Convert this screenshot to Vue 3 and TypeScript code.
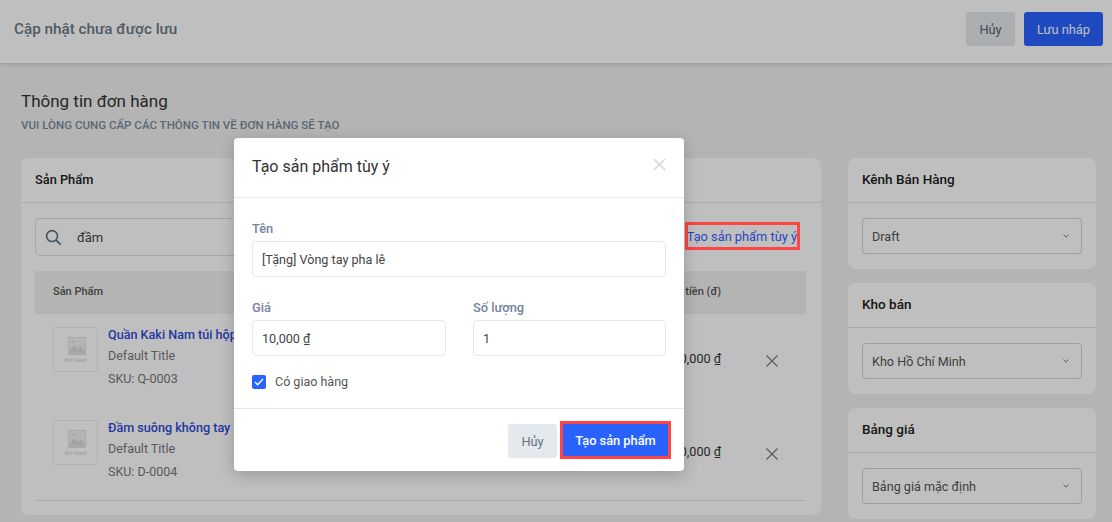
<script setup lang="ts">
const products = [
  { name: 'Quần Kaki Nam túi hộp', sku: 'SKU: Q-0003' },
  { name: 'Đầm suông không tay', sku: 'SKU: D-0004' },
]
const panels = [
  { title: 'Kênh Bán Hàng', value: 'Draft' },
  { title: 'Kho bán', value: 'Kho Hồ Chí Minh' },
  { title: 'Bảng giá', value: 'Bảng giá mặc định' },
]
</script>

<template>
  <div class="page">
    <header class="topbar">
      <div class="topbar-title">Cập nhật chưa được lưu</div>
      <div class="topbar-actions">
        <button class="btn btn-muted">Hủy</button>
        <button class="btn btn-primary">Lưu nháp</button>
      </div>
    </header>

    <div class="content">
      <h1 class="page-title">Thông tin đơn hàng</h1>
      <p class="page-sub">Vui lòng cung cấp các thông tin về đơn hàng sẽ tạo</p>

      <div class="columns">
        <section class="card main-card">
          <div class="card-head main-head">Sản Phẩm</div>
          <div class="main-body">
            <div class="toolbar">
              <div class="search">
                <svg class="search-icon" width="17" height="17" viewBox="0 0 18 18" fill="none" stroke="#5f6b75" stroke-width="1.7">
                  <circle cx="7.5" cy="7.5" r="5.8" />
                  <path d="M11.8 11.8 16.6 16.6" />
                </svg>
                <span>đầm</span>
              </div>
              <a class="custom-link">Tạo sản phẩm tùy ý</a>
            </div>
            <div class="table-head">
              <span>Sản Phẩm</span>
              <span class="head-total">Thành tiền (đ)</span>
            </div>
            <div v-for="p in products" :key="p.sku" class="row">
              <div class="thumb">
                <svg width="28" height="29" viewBox="0 0 28 29">
                  <rect x="6" y="1" width="18" height="18" fill="#e2e2e2" />
                  <rect x="7" y="2" width="16" height="14" fill="#f0f0f0" />
                  <path d="M7 16 12 9l4 4 3-3 4 6z" fill="#dadada" />
                  <circle cx="11" cy="5.5" r="1.6" fill="#e2e2e2" />
                </svg>
                <span class="thumb-text">Not found</span>
              </div>
              <div class="info">
                <div class="name">{{ p.name }}</div>
                <div class="variant">Default Title</div>
                <div class="variant">{{ p.sku }}</div>
              </div>
              <div class="price">10,000 ₫</div>
              <svg class="remove" width="12" height="12" viewBox="0 0 12 12" stroke="#777" stroke-width="1.1">
                <path d="M.5.5l11 11M11.5.5l-11 11" />
              </svg>
            </div>
          </div>
        </section>

        <aside class="side">
          <section v-for="s in panels" :key="s.title" class="card side-card">
            <div class="card-head">{{ s.title }}</div>
            <div class="side-body">
              <div class="select">
                <span>{{ s.value }}</span>
                <svg width="6" height="4" viewBox="0 0 6 4" fill="none" stroke="#7d7d7d" stroke-width="1">
                  <path d="M.5.5 3 3.2 5.5.5" />
                </svg>
              </div>
            </div>
          </section>
        </aside>
      </div>
    </div>

    <div class="overlay">
      <div class="link-mark"></div>
      <div class="modal">
        <div class="modal-head">
          <span>Tạo sản phẩm tùy ý</span>
          <svg width="13" height="13" viewBox="0 0 14 14" stroke="#d4d4d4" stroke-width="1.5">
            <path d="M1 1l12 12M13 1 1 13" />
          </svg>
        </div>
        <div class="modal-body">
          <label class="field">
            <span class="label">Tên</span>
            <span class="input">[Tặng] Vòng tay pha lê</span>
          </label>
          <div class="field-row">
            <label class="field">
              <span class="label">Giá</span>
              <span class="input">10,000 ₫</span>
            </label>
            <label class="field">
              <span class="label">Số lượng</span>
              <span class="input">1</span>
            </label>
          </div>
          <div class="check-row">
            <span class="check">
              <svg width="10" height="8" viewBox="0 0 10 8" fill="none" stroke="#fff" stroke-width="1.4">
                <path d="M1 4l2.7 2.7L9 1" />
              </svg>
            </span>
            <span>Có giao hàng</span>
          </div>
        </div>
        <div class="modal-foot">
          <button class="btn btn-cancel">Hủy</button>
          <button class="btn btn-create">Tạo sản phẩm</button>
        </div>
      </div>
    </div>
  </div>
</template>

<style>
html, body { margin: 0; height: 100%; overflow: hidden; }
</style>

<style scoped>
* { box-sizing: border-box; }
.page {
  position: relative;
  width: 1112px;
  height: 522px;
  overflow: hidden;
  background: #f1f1f1;
  font-family: Roboto, "Noto Sans", sans-serif;
  font-size: 14px;
  color: #333;
}
.topbar {
  height: 63px;
  padding: 12px 9px 0 14px;
  display: flex;
  justify-content: space-between;
  background: #fff;
  box-shadow: 0 1px 4px rgba(0, 0, 0, .18);
}
.topbar-title { padding-top: 8px; font-size: 15.25px; line-height: 18px; font-weight: 500; color: #6c7a86; }
.topbar-actions { display: flex; gap: 9px; }
.btn {
  height: 34px;
  border: 0;
  border-radius: 3px;
  font-family: inherit;
  font-size: 12.8px;
  padding: 0;
}
.btn-muted { width: 49px; background: #e4e9ed; color: #55606b; }
.btn-primary { width: 79px; background: #2962ff; color: #fff; }
.content { padding: 28px 16px 0 21px; }
.page-title { margin: 0; font-size: 17px; line-height: 20px; font-weight: 400; color: #333; }
.page-sub {
  margin: 6px 0 0;
  font-size: 11.55px;
  line-height: 16px;
  font-weight: 500;
  text-transform: uppercase;
  color: #7a8a99;
}
.columns { display: flex; gap: 27px; margin-top: 25px; align-items: flex-start; }
.card { background: #fff; border-radius: 8px; }
.main-card { width: 800px; height: 357px; }
.card-head {
  height: 45px;
  padding: 0 14px 2px;
  display: flex;
  align-items: center;
  font-size: 13.5px;
  font-weight: 500;
  color: #212121;
  border-bottom: 1px solid #e0e4e8;
}
.main-head { font-size: 12.8px; }
.main-body { padding: 15px 15px 0 14px; }
.toolbar { display: flex; justify-content: space-between; height: 38px; }
.search {
  width: 500px;
  display: flex;
  align-items: center;
  gap: 15px;
  padding-left: 9px;
  border: 1px solid #dde1e5;
  border-radius: 4px;
  font-size: 13px;
  color: #444;
}
.custom-link { padding: 10px 9px 0 0; color: #3a5cff; white-space: nowrap; font-size: 12.8px; line-height: 17px; }
.table-head {
  margin-top: 15px;
  height: 43px;
  padding: 0 85px 2px 18px;
  display: flex;
  align-items: center;
  justify-content: space-between;
  background: #f1f1f1;
  font-size: 11px;
  font-weight: 500;
  color: #555;
}
.row {
  height: 93px;
  padding: 13px 28px 0 18px;
  display: flex;
}
.row:last-child { height: 94px; border-bottom: 1px solid #e4e4e4; }
.thumb {
  width: 45px;
  height: 45px;
  flex: none;
  border: 1px solid #ececec;
  border-radius: 3px;
  display: flex;
  flex-direction: column;
  align-items: center;
  padding-top: 8px;
}
.thumb svg { margin-bottom: -8px; }
.thumb-text { font-size: 5px; font-style: italic; font-weight: 700; color: #dcdcdc; line-height: 6px; }
.info { margin-left: 10px; flex: 1; margin-top: -1px; }
.name { font-size: 12.6px; line-height: 17px; font-weight: 500; color: #2f4bd8; }
.variant { margin-top: 3px; font-size: 12.5px; line-height: 19px; color: #777; }
.variant + .variant { margin-top: 4px; }
.price { margin-top: 23px; font-size: 12.6px; line-height: 18px; color: #333; }
.remove { margin: 28px 0 0 45px; flex: none; }
.side { width: 248px; display: flex; flex-direction: column; gap: 14px; }
.side-card { height: 111px; }
.side-body { padding: 15px 14px; }
.select {
  height: 36px;
  padding: 0 12px 0 9px;
  display: flex;
  align-items: center;
  justify-content: space-between;
  border: 1px solid #cdd4da;
  border-radius: 4px;
  font-size: 12.6px;
  color: #555;
}
.overlay { position: absolute; inset: 0; background: rgba(0, 0, 0, .25); }
.link-mark {
  position: absolute;
  left: 685px;
  top: 222px;
  width: 115px;
  height: 28px;
  border: 3px solid #ff4444;
}
.modal {
  position: absolute;
  left: 234px;
  top: 138px;
  width: 450px;
  height: 333px;
  background: #fff;
  border-radius: 4px;
  box-shadow: 0 4px 16px rgba(0, 0, 0, .2);
  display: flex;
  flex-direction: column;
}
.modal-head {
  height: 60px;
  padding: 0 18px;
  display: flex;
  align-items: center;
  justify-content: space-between;
  border-bottom: 1px solid #e8eaed;
  font-size: 16px;
  color: #333;
}
.modal-head span { margin-top: -2px; }
.modal-head svg { margin-top: -7px; }
.modal-body { flex: 1; padding: 22px 18px 0; }
.field { display: block; }
.label { display: block; font-size: 12.8px; line-height: 17px; font-weight: 500; color: #7583a0; }
.input {
  display: flex;
  align-items: center;
  margin-top: 4px;
  height: 36px;
  padding: 0 9px;
  border: 1px solid #e3e7eb;
  border-radius: 4px;
  font-size: 12.6px;
  color: #444;
}
.field-row {
  display: grid;
  grid-template-columns: 194px 193px;
  gap: 27px;
  margin-top: 22px;
}
.check-row { display: flex; align-items: center; gap: 9px; margin-top: 18px; font-size: 12.5px; color: #555; }
.check {
  width: 14px;
  height: 14px;
  border-radius: 2px;
  background: #2962ff;
  display: flex;
  align-items: center;
  justify-content: center;
}
.modal-foot {
  height: 63px;
  padding: 15px 16px 0 0;
  display: flex;
  justify-content: flex-end;
  align-items: flex-start;
  gap: 6px;
  border-top: 1px solid #e4e6e9;
}
.btn-cancel { width: 49px; background: #e4e9ed; color: #66707a; }
.btn-create {
  width: 105px;
  height: 32px;
  border-radius: 0;
  background: #2962ff;
  color: #fff;
  font-weight: 500;
  outline: 3px solid #ff4444;
}
</style>
